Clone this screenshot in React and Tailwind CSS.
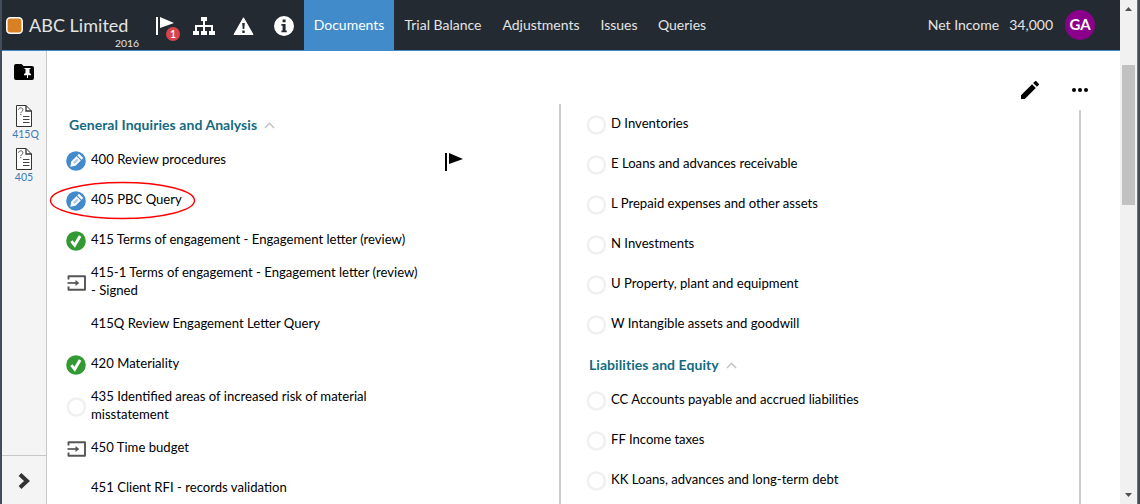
import React from "react";

const leftRows = [
  { icon: "edit", lines: ["400 Review procedures"], flag: true },
  { icon: "edit", lines: ["405 PBC Query"], circled: true },
  { icon: "done", lines: ["415 Terms of engagement - Engagement letter (review)"] },
  { icon: "link", lines: ["415-1 Terms of engagement - Engagement letter (review)", "- Signed"] },
  { icon: "none", lines: ["415Q Review Engagement Letter Query"] },
  { icon: "done", lines: ["420 Materiality"] },
  { icon: "empty", lines: ["435 Identified areas of increased risk of material", "misstatement"] },
  { icon: "link", lines: ["450 Time budget"] },
  { icon: "none", lines: ["451 Client RFI - records validation"] },
];

const assetRows = [
  "D Inventories",
  "E Loans and advances receivable",
  "L Prepaid expenses and other assets",
  "N Investments",
  "U Property, plant and equipment",
  "W Intangible assets and goodwill",
];

const liabilityRows = [
  "CC Accounts payable and accrued liabilities",
  "FF Income taxes",
  "KK Loans, advances and long-term debt",
];

function StatusIcon({ kind }) {
  if (kind === "edit")
    return (
      <svg className="mt-[2px] size-5 shrink-0" viewBox="0 0 20 20">
        <circle cx="10" cy="10" r="9.8" fill="#428bca" />
        <g transform="rotate(45 10 10)" fill="#fff">
          <path d="M7 2.800h6v2.300H7zM7 6.200h6v7.500L10 18l-3-4.300z" />
          <path d="M8.900 7.500h2.200v5.600H8.900z" fill="#428bca" opacity=".45" />
        </g>
      </svg>
    );
  if (kind === "done")
    return (
      <svg className="mt-[2px] size-5 shrink-0" viewBox="0 0 20 20">
        <circle cx="10" cy="10" r="9.8" fill="#339933" />
        <path d="M5.400 10.200l3.300 4 5.400-9.200" fill="none" stroke="#fff" strokeWidth="2.9" />
      </svg>
    );
  if (kind === "link")
    return (
      <svg className="mt-[2px] size-5 shrink-0" viewBox="0 0 20 20">
        <path
          d="M2.500 6.500V3.200h16.500v13.600H2.500v-3.300"
          fill="none"
          stroke="#555"
          strokeWidth="1.9"
          strokeLinejoin="round"
        />
        <path d="M1.500 10h9.500" stroke="#555" strokeWidth="1.7" />
        <path d="M9.500 6.900l3.800 3.100-3.800 3.100z" fill="#555" />
      </svg>
    );
  if (kind === "empty")
    return (
      <svg className="mt-[2px] size-5 shrink-0" viewBox="0 0 20 20">
        <circle cx="10.4" cy="10" r="8.600" fill="#fff" stroke="#f0f0f0" strokeWidth="2.5" />
      </svg>
    );
  return <span className="size-5 shrink-0" />;
}

function Row({ icon, lines, flag, circled }) {
  return (
    <div
      className={
        "relative flex shrink-0 items-center gap-[5px] text-[13.11px] leading-[18px] text-black " +
        (lines.length > 1 ? "h-11" : "h-10")
      }
    >
      <StatusIcon kind={icon} />
      <div className="pb-[2px]">
        {lines.map((l) => (
          <div key={l} className="whitespace-nowrap">
            {l}
          </div>
        ))}
      </div>
      {flag && (
        <svg className="mt-1 mr-[96px] ml-auto h-[18px] w-[18px]" viewBox="0 0 18 18">
          <path d="M0 0h2v18H0zM4 0l14 6-14 5z" fill="#000" />
        </svg>
      )}
      {circled && (
        <svg className="absolute -top-0.5 -left-[17px] h-11 w-[148px]" viewBox="0 0 148 44">
          <ellipse cx="73.5" cy="22.500" rx="72" ry="18" fill="none" stroke="#f00" strokeWidth="1.4" />
        </svg>
      )}
    </div>
  );
}

function Heading({ children, className }) {
  return (
    <div
      className={
        "flex shrink-0 items-center text-[14px] font-bold tracking-[0.06px] text-[#146b82] " + className
      }
    >
      <span className="whitespace-nowrap">{children}</span>
      <svg className="mt-[3px] ml-[7px] h-[7px] w-[11px]" viewBox="0 0 11 7">
        <path d="M1 6l4.5-4.7L10 6" fill="none" stroke="#c4c4c4" strokeWidth="1.6" />
      </svg>
    </div>
  );
}

function DocShortcut({ label, className, labelClassName }) {
  return (
    <div className={"flex flex-col items-center text-[#3d7ab8] " + className}>
      <svg className="h-[22px] w-4" viewBox="0 0 16 22">
        <path d="M.5.5H10l5.5 5.5v15.500H.5z" fill="#fff" stroke="#333" />
        <path d="M10 .5V6h5.500" fill="none" stroke="#333" strokeWidth="1.3" />
        <path d="M2.600 4.800c0-2.600 4.300-2.600 4.300 0 0 1.600-2.100 1.700-2.100 3.400M4.800 9v1.200" fill="none" stroke="#555" />
        <path d="M7 11.500h6.500M7 14.500h6.500M7 17.500h6.500" fill="none" stroke="#444" strokeWidth="1.200" />
      </svg>
      <span className={"mt-px text-[10.5px] leading-[13px] " + labelClassName}>{label}</span>
    </div>
  );
}

function Header() {
  return (
    <header className="flex h-[51px] shrink-0 border-b border-[#428bca] bg-[#232a32] text-[#e4e4e4]">
      <div className="flex w-[302px] shrink-0">
        <svg className="mt-[17px] ml-1 size-[17px] shrink-0" viewBox="0 0 17 17">
          <rect x=".8" y=".8" width="15.4" height="15.4" rx="3.5" fill="#d98023" stroke="#fff" strokeWidth="1.6" />
        </svg>
        <div className="ml-1.5 w-[110px] shrink-0">
          <div className="mt-[13px] text-[18px] leading-[24px] tracking-[0.03px] whitespace-nowrap">ABC Limited</div>
          <div className="mt-px text-right text-[10.4px] leading-[11px]">2016</div>
        </div>
        <svg className="mt-4 ml-[17px] h-[26px] w-[25px] shrink-0" viewBox="0 0 25 26">
          <path d="M0 1h2v18H0zM4 1l14 6-14 5z" fill="#fff" />
          <circle cx="17" cy="18" r="7" fill="#d9434a" />
          <text x="17" y="21.800" textAnchor="middle" fontSize="10.500" fontWeight="600" fill="#fff">
            1
          </text>
        </svg>
        <svg className="mt-[17px] ml-[12px] h-[18px] w-[22px] shrink-0" viewBox="0 0 22 18" fill="#fff">
          <path d="M8 0h6v4h-2v4h8v6h2v4h-6v-4h2v-4h-6v4h2v4H8v-4h2v-4H4v4h2v4H0v-4h2V8h8V4H8z" />
        </svg>
        <svg className="mt-[17px] ml-[18px] h-[19px] w-[21px] shrink-0" viewBox="0 0 21 19">
          <path d="M10.500 .8L20 17.500H1z" fill="#fff" stroke="#fff" strokeLinejoin="round" />
          <path d="M9.200 6h2.600l-.5 6H9.700zM9.300 13.500h2.400v2.400H9.300z" fill="#232a32" />
        </svg>
        <svg className="mt-4 ml-[20px] size-5 shrink-0" viewBox="0 0 20 20">
          <circle cx="10" cy="10" r="10" fill="#fff" />
          <path d="M8.600 3.600h3v2.600h-3zM7.400 8h4.200v6.600h1.200v1.700H7.400v-1.700h1.200V9.700H7.400z" fill="#232a32" />
        </svg>
      </div>
      <nav className="flex h-[50px] text-[14px] leading-[49px] whitespace-nowrap">
        <span className="w-[90px] bg-[#428bca] text-center text-white">Documents</span>
        <span className="w-[98px] text-center">Trial Balance</span>
        <span className="w-[98px] text-center">Adjustments</span>
        <span className="w-[58px] text-center">Issues</span>
        <span className="w-[68px] text-center">Queries</span>
      </nav>
      <div className="ml-auto flex h-[50px] items-center pr-[25px] text-[14px] whitespace-nowrap">
        <span className="pb-[2px]">Net Income</span>
        <span className="ml-[10px] pb-[2px]">34,000</span>
        <span className="ml-3 flex size-[30px] items-center justify-center rounded-full bg-[#8b008b] pb-[2px] text-[15px] font-bold text-white">
          GA
        </span>
      </div>
    </header>
  );
}

function Sidebar() {
  return (
    <aside className="flex w-[45px] shrink-0 flex-col border-r border-[#c8c8c8] bg-[#f4f4f4]">
      <svg className="mt-[13px] ml-3 h-4 w-5" viewBox="0 0 20 16">
        <path d="M2 0h5.500l2 2H18a2 2 0 0 1 2 2v10a2 2 0 0 1-2 2H2a2 2 0 0 1-2-2V2a2 2 0 0 1 2-2z" />
        <path d="M10.500 4h6v1h-1v4l1.500 1v1.200h-3V14h-1v-2.800h-3V10l1.500-1V5h-1z" fill="#fff" />
      </svg>
      <DocShortcut label="415Q" className="mt-[25px]" labelClassName="pl-[3px]" />
      <DocShortcut label="405" className="mt-[7px]" labelClassName="" />
      <div className="mt-auto h-[49px] border-t border-[#c8c8c8]">
        <svg className="mt-[17px] ml-[16px] h-4 w-3" viewBox="0 0 12 16">
          <path d="M2 1.500L9 8l-7 6.500" fill="none" stroke="#333" strokeWidth="4" />
        </svg>
      </div>
    </aside>
  );
}

export default function App() {
  return (
    <div className="flex h-[504px] w-[1140px] overflow-hidden border-r-2 border-l-2 border-[#424d5c] bg-white font-['Lato',sans-serif]">
      <div className="flex w-[1118px] shrink-0 flex-col">
        <Header />
        <div className="flex min-h-0 flex-1">
          <Sidebar />
          <main className="flex min-w-0 flex-1">
            <section className="flex w-[514px] shrink-0 flex-col pt-[53px]">
              <div className="flex min-h-0 flex-1 flex-col overflow-hidden border-r-2 border-[#ccc] pl-[19px]">
                <Heading className="h-9 pt-1 pl-[3px]">General Inquiries and Analysis</Heading>
                {leftRows.map((r) => (
                  <Row key={r.lines[0]} {...r} />
                ))}
              </div>
            </section>
            <section className="flex min-w-0 flex-1 flex-col">
              <div className="flex h-[53px] shrink-0 items-end justify-end pr-[32px]">
                <svg className="mb-[5px] size-[18px]" viewBox="3 3 18 18">
                  <path d="M3 17.250V21h3.750L17.810 9.940l-3.750-3.750L3 17.250zM20.710 7.040a1 1 0 0 0 0-1.410l-2.340-2.340a1 1 0 0 0-1.410 0l-1.830 1.830 3.750 3.750 1.830-1.830z" />
                </svg>
                <svg className="mb-[12px] ml-[33px] h-1 w-4" viewBox="0 0 16 4">
                  <circle cx="2" cy="2" r="2" />
                  <circle cx="8" cy="2" r="2" />
                  <circle cx="14" cy="2" r="2" />
                </svg>
              </div>
              <div className="flex min-h-0 flex-1">
                <div className="flex w-[518px] flex-col overflow-hidden pl-[25px]">
                  {assetRows.map((t) => (
                    <Row key={t} icon="empty" lines={[t]} />
                  ))}
                  <Heading className="h-9 pt-1 pl-[3px]">Liabilities and Equity</Heading>
                  {liabilityRows.map((t) => (
                    <Row key={t} icon="empty" lines={[t]} />
                  ))}
                </div>
                <div className="mt-[6px] w-0.5 bg-[#ccc]" />
              </div>
            </section>
          </main>
        </div>
      </div>
      <div className="flex w-[17px] shrink-0 flex-col items-center bg-[#f1f1f1]">
        <svg className="mt-[7px] h-1 w-[7px]" viewBox="0 0 7 4">
          <path d="M0 4L3.500 0 7 4z" fill="#505050" />
        </svg>
        <div className="mt-[54px] h-[140px] w-[13px] bg-[#c1c1c1]" />
        <svg className="mt-auto mb-[7px] h-1 w-[7px]" viewBox="0 0 7 4">
          <path d="M0 0h7L3.500 4z" fill="#505050" />
        </svg>
      </div>
      <div className="w-px shrink-0 bg-[#6d7580]" />
    </div>
  );
}
